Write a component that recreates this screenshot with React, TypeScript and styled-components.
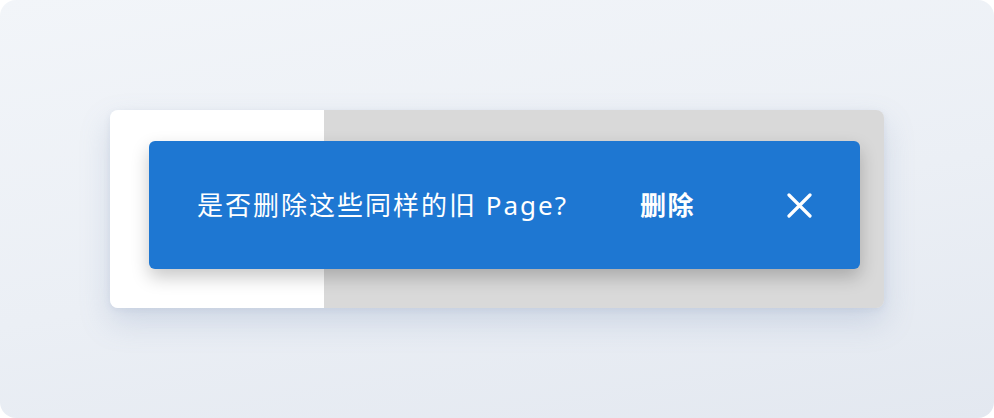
import styled, { createGlobalStyle } from "styled-components";

const GlobalStyle = createGlobalStyle`
  html, body {
    margin: 0;
    padding: 0;
    background: #ffffff;
  }
  body {
    font-family: "Noto Sans", "Noto Sans CJK SC", sans-serif;
  }
`;

const Stage = styled.div`
  width: 994px;
  height: 418px;
  box-sizing: border-box;
  border-radius: 16px;
  background: linear-gradient(170deg, #f2f5f9 0%, #ebeff5 55%, #e3e8f0 100%);
  display: flex;
  align-items: center;
  justify-content: center;
  overflow: hidden;
`;

const Card = styled.div`
  position: relative;
  width: 774px;
  height: 198px;
  border-radius: 8px;
  display: flex;
  overflow: hidden;
  box-shadow: 0 14px 30px rgba(120, 145, 185, 0.25), 0 2px 6px rgba(120, 140, 170, 0.12);
`;

const Panel = styled.div<{ $width?: string; $bg: string }>`
  flex: ${(p) => (p.$width ? `0 0 ${p.$width}` : "1")};
  background: ${(p) => p.$bg};
`;

const Snackbar = styled.div`
  position: absolute;
  top: 31px;
  left: 39px;
  right: 24px;
  bottom: 39px;
  border-radius: 6px;
  background: #1e77d2;
  box-shadow: 0 8px 18px rgba(0, 0, 0, 0.22);
  display: flex;
  align-items: center;
  padding: 0 48px;
  color: #ffffff;
`;

const Message = styled.span`
  font-size: 26px;
  letter-spacing: 2px;
  white-space: nowrap;
  line-height: 1;
`;

const Action = styled.button`
  margin-left: 72px;
  border: none;
  background: transparent;
  padding: 0;
  color: #ffffff;
  font-family: "Noto Sans", "Noto Sans CJK SC", sans-serif;
  font-size: 26px;
  font-weight: 600;
  letter-spacing: 1.5px;
  line-height: 1;
  cursor: pointer;
`;

const Close = styled.button`
  margin-left: auto;
  width: 25px;
  height: 25px;
  border: none;
  background: transparent;
  padding: 0;
  display: flex;
  align-items: center;
  justify-content: center;
  cursor: pointer;
`;

const App = () => {
  return (
    <>
      <GlobalStyle />
      <Stage>
        <Card>
          <Panel $width="214px" $bg="#ffffff" />
          <Panel $bg="#d9d9d9" />
          <Snackbar>
            <Message>是否删除这些同样的旧 Page?</Message>
            <Action>删除</Action>
            <Close>
              <svg width="25" height="25" viewBox="0 0 25 25">
                <path
                  d="M2 2 L23 23 M23 2 L2 23"
                  stroke="#ffffff"
                  strokeWidth="3.2"
                  strokeLinecap="round"
                />
              </svg>
            </Close>
          </Snackbar>
        </Card>
      </Stage>
    </>
  );
};

export default App;
